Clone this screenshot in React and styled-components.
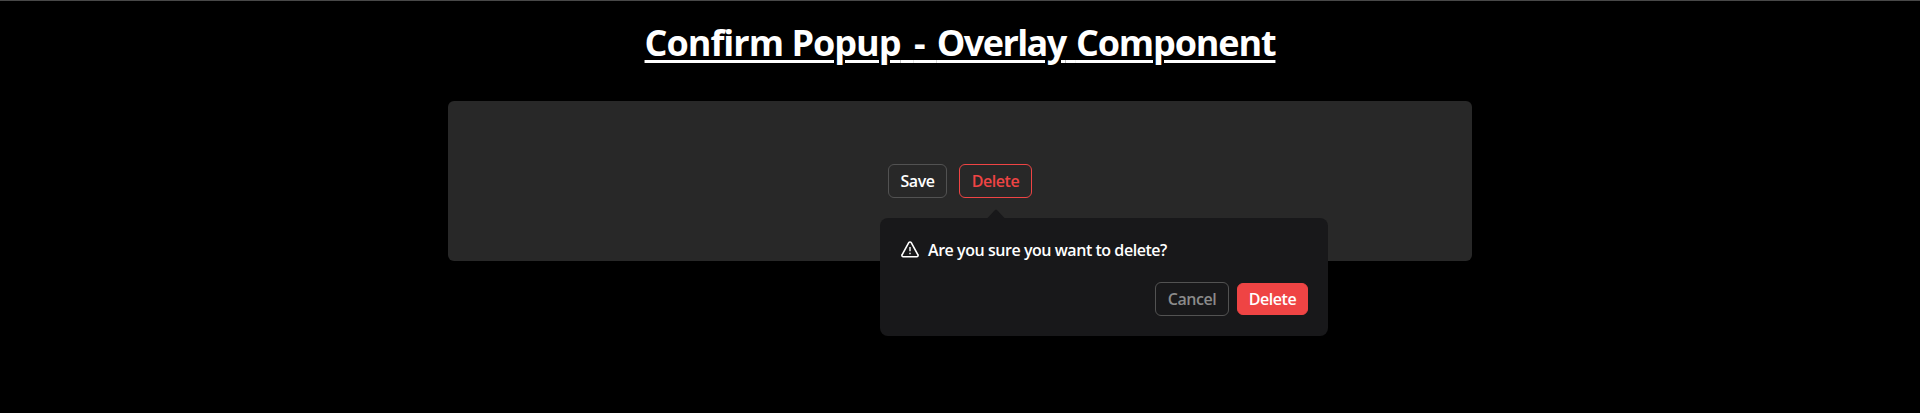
import React from "react";
import styled, { createGlobalStyle } from "styled-components";

const GlobalStyle = createGlobalStyle`
  *, *::before, *::after { box-sizing: border-box; }
  body {
    margin: 0;
    background: #000;
    color: #fff;
    font-family: "Segoe UI", "Open Sans", "Noto Sans", sans-serif;
    overflow: hidden;
  }
`;

const Page = styled.main`
  display: flex;
  flex-direction: column;
  align-items: center;
  height: 413px;
  border-top: 1px solid #484848;
`;

const Title = styled.h1`
  margin: 22px 0 38px;
  font-size: 36px;
  line-height: 40px;
  font-weight: 700;
  white-space: pre;
  text-decoration: underline;
  text-decoration-thickness: 3px;
  text-underline-offset: 4px;
`;

const Word = styled.span`
  letter-spacing: ${(p) => p.$tracking}px;
`;

const Panel = styled.section`
  display: flex;
  align-items: center;
  justify-content: center;
  gap: 12px;
  width: 1024px;
  height: 160px;
  border-radius: 6px;
  background: #282828;
`;

const Anchor = styled.div`
  position: relative;
`;

const tones = {
  neutral: { color: "#fff", border: "#525252", fill: "transparent" },
  danger: { color: "#ef4444", border: "#ef4444", fill: "transparent" },
  muted: { color: "#8b8b8b", border: "#525252", fill: "transparent" },
  solid: { color: "#fff", border: "#ef4444", fill: "#ef4444" },
};

const Button = styled.button`
  display: flex;
  align-items: center;
  justify-content: center;
  width: ${(p) => p.$width}px;
  height: ${(p) => (p.$tone === "solid" ? 32 : 34)}px;
  padding: 0;
  border: 1px solid ${(p) => tones[p.$tone].border};
  border-radius: 6px;
  background: ${(p) => tones[p.$tone].fill};
  color: ${(p) => tones[p.$tone].color};
  font: 600 16px/24px "Segoe UI", "Open Sans", "Noto Sans", sans-serif;
  letter-spacing: -0.45px;
  white-space: nowrap;
`;

const Popup = styled.div`
  position: absolute;
  top: 54px;
  left: -79px;
  width: 448px;
  height: 118px;
  padding: 20px;
  border-radius: 8px;
  background: #18181a;
`;

const Arrow = styled.svg`
  position: absolute;
  top: -9px;
  left: 107px;
  display: block;
`;

const Message = styled.div`
  display: flex;
  align-items: center;
  gap: 9px;
  height: 24px;
  padding-left: 1px;
`;

const MessageText = styled.span`
  font-size: 16px;
  line-height: 24px;
  font-weight: 600;
  letter-spacing: -0.45px;
  white-space: nowrap;
`;

const Actions = styled.div`
  display: flex;
  align-items: center;
  justify-content: flex-end;
  gap: 8px;
  margin-top: 20px;
`;

function WarningIcon() {
  return (
    <svg width="18" height="18" viewBox="0 0.4 18 18" fill="none" stroke="#fff">
      <path
        d="M7.75 2.1a1.45 1.45 0 0 1 2.5 0l6.55 11.9a1.35 1.35 0 0 1-1.2 2.15H2.4A1.35 1.35 0 0 1 1.2 14Z"
        strokeWidth="1.6"
        strokeLinejoin="round"
      />
      <path d="M9 6.4v4.2M9 12.1v1.5" strokeWidth="1.4" />
    </svg>
  );
}

export default function App() {
  return (
    <>
      <GlobalStyle />
      <Page>
        <Title>
          <Word $tracking={-1}>Confirm Popup</Word>
          <Word $tracking={4}> </Word>
          <Word $tracking={1}>- </Word>
          <Word $tracking={-1.6}>Overlay</Word>
          <Word $tracking={1}> </Word>
          <Word $tracking={-1.15}>Component</Word>
        </Title>
        <Panel>
          <Button $tone="neutral" $width={59}>Save</Button>
          <Anchor>
            <Button $tone="danger" $width={73}>Delete</Button>
            <Popup role="alertdialog">
              <Arrow width="18" height="10" viewBox="0 0 18 10">
                <path d="M0 9.5 8 1Q9 0 10 1L18 9.5V10H0Z" fill="#18181a" />
              </Arrow>
              <Message>
                <WarningIcon />
                <MessageText>Are you sure you want to delete?</MessageText>
              </Message>
              <Actions>
                <Button $tone="muted" $width={74}>Cancel</Button>
                <Button $tone="solid" $width={71}>Delete</Button>
              </Actions>
            </Popup>
          </Anchor>
        </Panel>
      </Page>
    </>
  );
}
